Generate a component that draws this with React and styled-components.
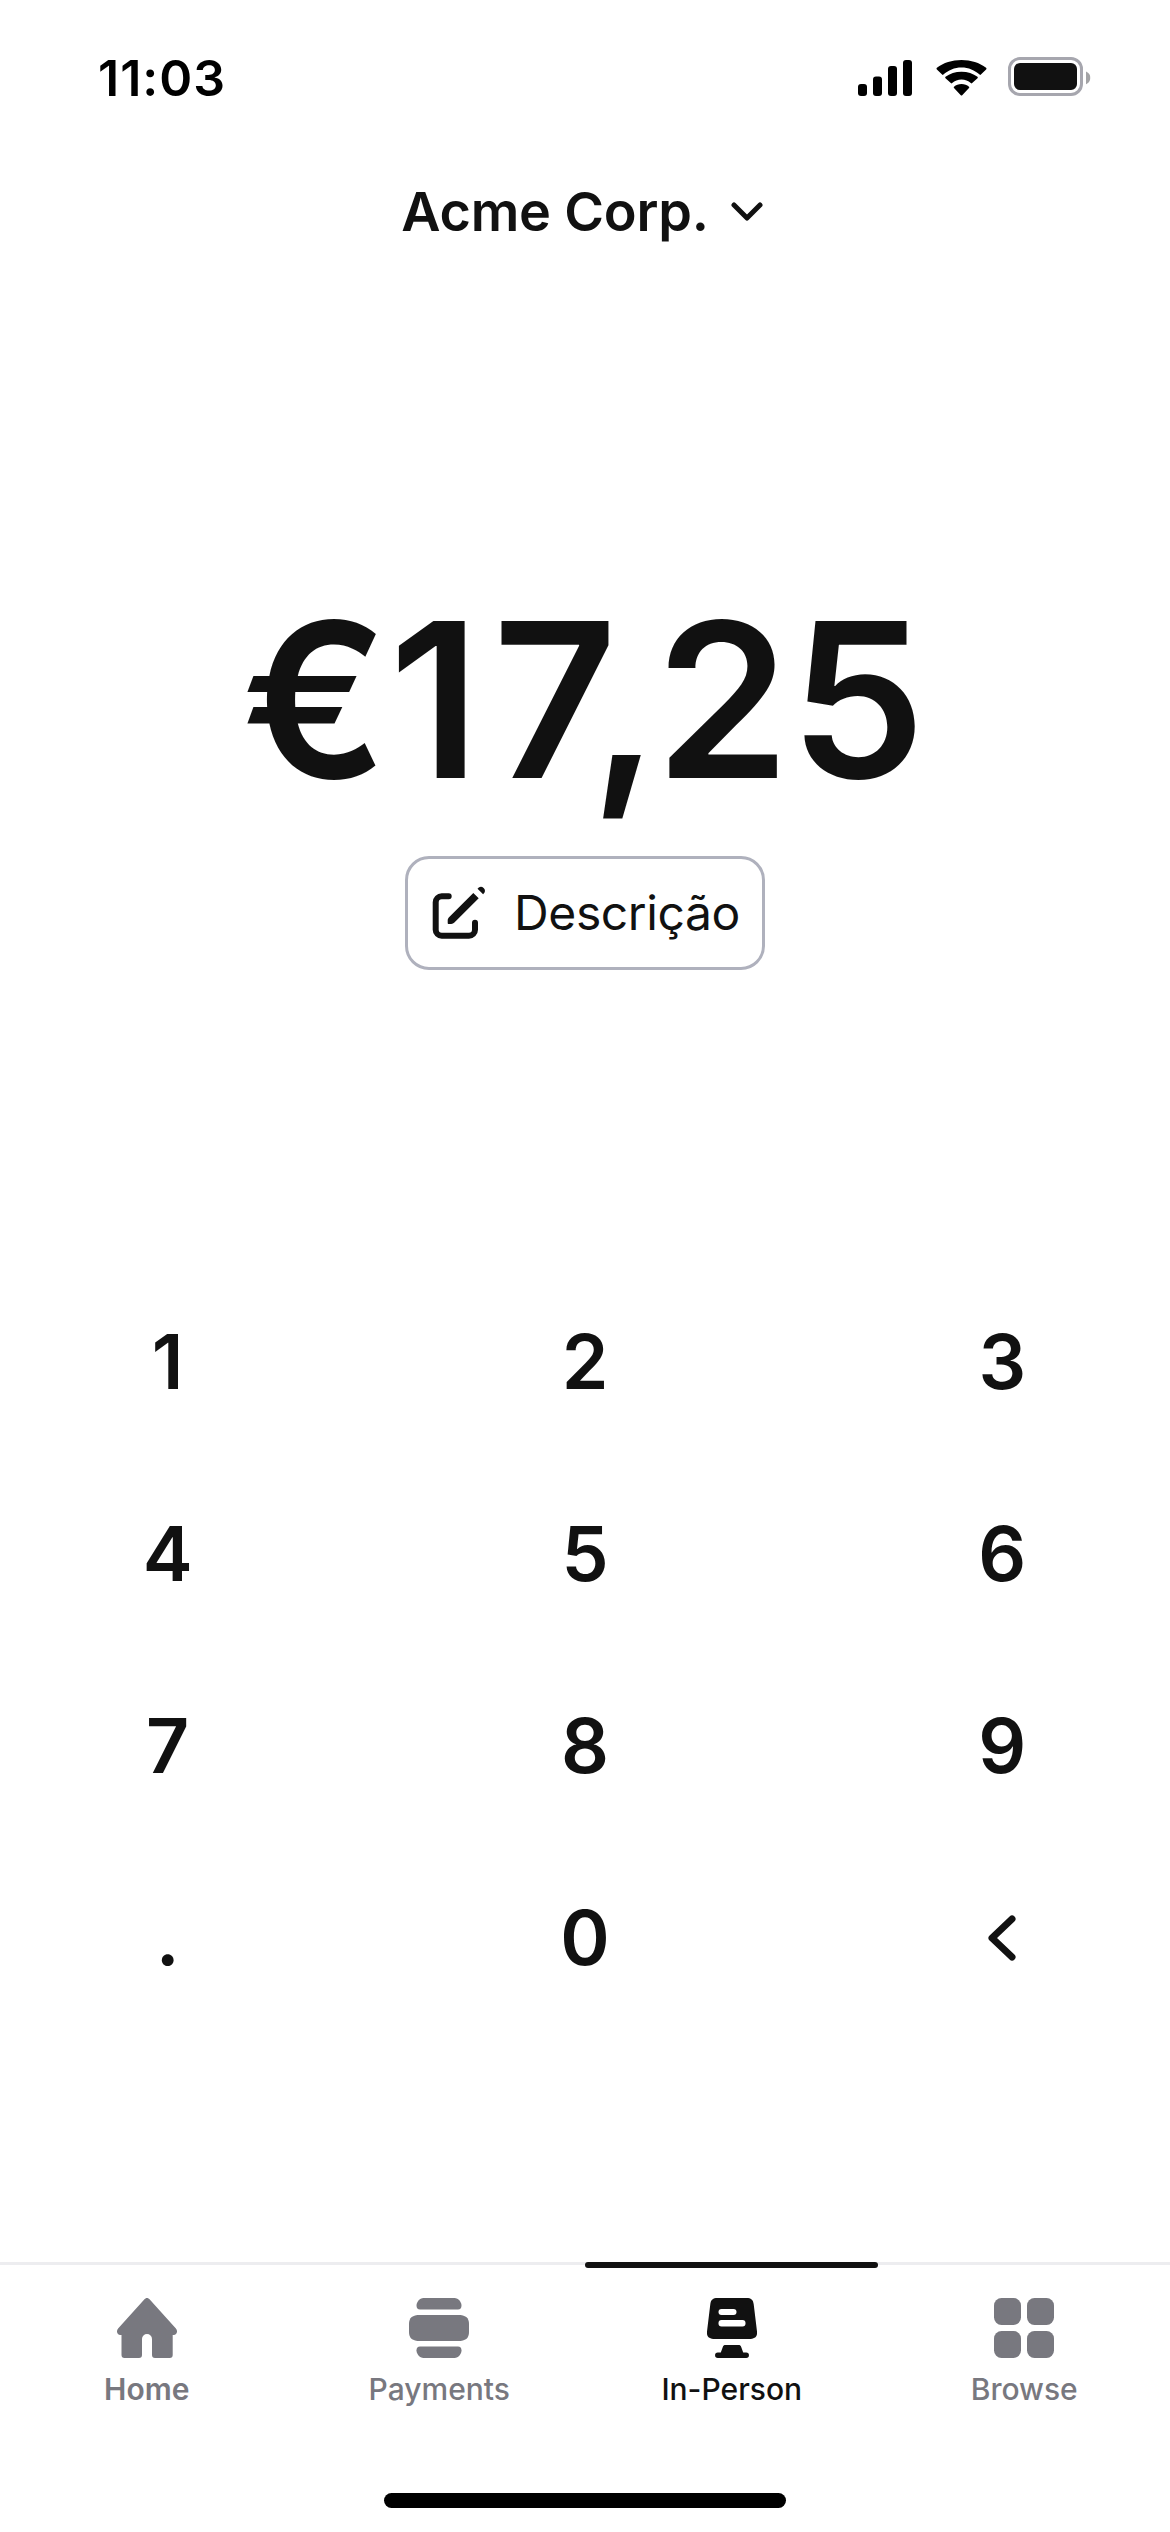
import React from 'react';
import styled, { createGlobalStyle } from 'styled-components'

const GlobalStyle = createGlobalStyle`
  * {
    box-sizing: border-box;
  }
  body {
    margin: 0;
    background-color: #fff;
    font-family: Inter, sans-serif;
    color: #111;
  }
`

const Screen = styled.div`
  display: flex;
  flex-direction: column;
  width: 1170px;
  height: 2532px;
  background-color: #fff;
  overflow: hidden;
`

const StatusBar = styled.div`
  display: flex;
  align-items: center;
  justify-content: space-between;
  height: 156px;
  padding: 0 79px 0 98px;
  color: #000;
`

const Time = styled.div`
  font-size: 50px;
  font-weight: 600;
  line-height: 60px;
  letter-spacing: 1px;
`

const StatusIcons = styled.div`
  display: flex;
  align-items: flex-end;
  margin-bottom: 3px;

  svg {
    display: block;
  }
  svg + svg {
    margin-left: 24px;
  }
  svg:last-child {
    margin-left: 21px;
  }
`

const Account = styled.button`
  display: flex;
  align-items: center;
  justify-content: center;
  height: 112px;
  padding: 0 6px 0 0;
  border: none;
  background: none;
  color: #111;
  font-family: inherit;
  font-size: 54px;
  font-weight: 600;
  line-height: 64px;
  letter-spacing: -0.2px;
  gap: 22px;
`

const AmountArea = styled.div`
  display: flex;
  flex-direction: column;
  align-items: center;
  height: 998px;
  padding-top: 301px;
`

const Amount = styled.div`
  padding-right: 3px;
  font-size: 216px;
  font-weight: 600;
  font-kerning: none;
  line-height: 262px;
  white-space: nowrap;
`

const Digit = styled.span`
  letter-spacing: ${({ $space }) => $space}px;
`

const DescriptionButton = styled.button`
  display: flex;
  align-items: center;
  justify-content: center;
  width: 360px;
  height: 114px;
  margin-top: 25px;
  padding: 0 0 0 2px;
  border: 3px solid #afb1bd;
  border-radius: 24px;
  background-color: #fff;
  color: #111;
  font-family: inherit;
  font-size: 48px;
  line-height: 58px;
  letter-spacing: -0.4px;
  gap: 28px;
`

const Keypad = styled.div`
  display: grid;
  grid-template-columns: repeat(3, 1fr);
  grid-auto-rows: 192px;
  width: 1252px;
  margin-left: -41px;
`

const Key = styled.button`
  display: flex;
  align-items: center;
  justify-content: center;
  padding: 0;
  border: none;
  background: none;
  color: #111;
  font-family: inherit;
  font-size: 75px;
  font-weight: 600;
  line-height: 90px;
`

const TabBar = styled.nav`
  display: grid;
  grid-template-columns: repeat(4, 1fr);
  height: 231px;
  margin-top: auto;
  border-top: 3px solid #ededf0;
`

const Tab = styled.a`
  position: relative;
  display: flex;
  flex-direction: column;
  align-items: center;
  padding: 33px 0 0 1px;
  gap: 13px;
  color: ${({ $active }) => ($active ? '#111' : '#78787f')};
  font-size: 30px;
  font-weight: ${({ $bold }) => ($bold ? 600 : 500)};
  line-height: 36px;

  svg {
    display: block;
  }
`

// sits over the top border of the bar
const ActiveLine = styled.div`
  position: absolute;
  top: -3px;
  left: 0;
  width: 100%;
  height: 6px;
  border-radius: 3px;
  background-color: #111;
`

const HomeIndicator = styled.div`
  align-self: center;
  width: 402px;
  height: 15px;
  margin-bottom: 24px;
  border-radius: 8px;
  background-color: #000;
`

const SignalIcon = () => (
  <svg width="54" height="36" viewBox="0 0 54 36">
    <rect x="0" y="24" width="9" height="12" rx="3" />
    <rect x="15" y="16.5" width="9" height="19.5" rx="3" />
    <rect x="30" y="6" width="9" height="30" rx="3" />
    <rect x="45" y="0" width="9" height="36" rx="3" />
  </svg>
)

const WifiIcon = () => (
  <svg width="51" height="36" viewBox="0 0 51 36">
    <path d="M25.5 7.4c7 0 13.300 2.700 18.100 7.200a.9.9 0 0 0 1.300 0l5.200-5.200c.6-.5.500-1.200 0-1.700C43.500 2.800 35 0 25.500 0S7.500 2.800.9 7.700C.4 8.200.3 8.900.9 9.400l5.200 5.200a.9.9 0 0 0 1.300 0C12.200 10.100 18.500 7.400 25.500 7.400z" />
    <path d="M25.500 19.400c3.600 0 6.800 1.400 9.300 3.600.5.500 1 .5 1.400 0l5.300-4.700c.5-.5.5-1.100 0-1.600C37.200 13.600 31.600 11.700 25.500 11.700S13.800 13.600 9.500 16.700c-.5.5-.5 1.100 0 1.600l5.300 4.700c.4.5.9.5 1.400 0 2.500-2.200 5.700-3.600 9.300-3.600z" />
    <path d="M33 26.700c.4.400.4.900 0 1.300l-6.800 7.200a1 1 0 0 1-1.400 0L18 28c-.4-.4-.4-.9 0-1.300 2-1.700 4.600-2.700 7.500-2.700s5.500 1 7.500 2.700z" />
  </svg>
)

const BatteryIcon = () => (
  <svg width="83" height="39" viewBox="0 0 83 39">
    <rect x="1.500" y="1.500" width="72" height="36" rx="10.500" fill="none" stroke="#a6a6ae" strokeWidth="3" />
    <rect x="6" y="6" width="63" height="27" rx="6" fill="#111" />
    <path d="M78 14.500c3.800 2 4.200 4 4.200 6.200s-.4 4.500-4.200 6.500z" fill="#a3a3a5" />
  </svg>
)

const EditIcon = () => (
  <svg width="54" height="54" viewBox="0 0 54 54" fill="none">
    <path d="M16.700 10.300H9.700a6 6 0 0 0-6 6v27.400a6 6 0 0 0 6 6h27.300a6 6 0 0 0 6-6V36.700" stroke="#111" strokeWidth="6" strokeLinecap="round" />
    <path d="M41.300 7l5.400 5.300-24.300 24.300a4.500 4.500 0 0 1-3.200 1.400h-2.400c-.7 0-1.100-.5-1.100-1.100v-2.500c0-1.200.5-2.300 1.300-3.100z" fill="#111" />
    <path d="M45.500 2.800l1.300-1.300a4 4 0 0 1 5.600 5.300l-1.300 1.400z" fill="#111" />
  </svg>
)

const HomeIcon = () => (
  <svg width="60" height="60" viewBox="0 0 60 60" fill="currentColor">
    <path d="M27.700 1.100a3.200 3.200 0 0 1 4.600 0l26.600 29.400c2.200 2.400 1 6.500-2.200 6.500h-1v20a3 3 0 0 1-3 3H38a3 3 0 0 1-3-3V41a5 5 0 0 0-10 0v16a3 3 0 0 1-3 3H7.500a3 3 0 0 1-3-3V37H3.300C.1 37-1.100 32.900 1.100 30.500z" />
  </svg>
)

const PaymentsIcon = () => (
  <svg width="60" height="60" viewBox="0 0 60 60" fill="currentColor">
    <path d="M14.500 0h31c4 0 7 4 7 7.700 0 2.200-1.200 3.800-3.500 3.800H11c-2.300 0-3.500-1.600-3.500-3.800C7.500 4 10.500 0 14.500 0z" />
    <path d="M11 17h38c7.500 0 11 2.600 11 9v8c0 6.400-3.500 9-11 9H11C3.500 43 0 40.400 0 34v-8c0-6.400 3.500-9 11-9z" />
    <path d="M11 48.500h38c2.300 0 3.500 1.600 3.500 3.800 0 3.700-3 7.700-7 7.700h-31c-4 0-7-4-7-7.700 0-2.200 1.200-3.800 3.500-3.800z" />
  </svg>
)

const TerminalIcon = () => (
  <svg width="50" height="60" viewBox="0 0 50 60">
    <path d="M10.500 0h29c4.500 0 6.700 1.700 7.200 6.200L50 33.500c.6 5.500-2.300 7.500-8 7.500H8c-5.700 0-8.600-2-8-7.500L3.300 6.200C3.800 1.700 6 0 10.500 0z" fill="#111" />
    <rect x="11.500" y="11" width="18" height="6" rx="3" fill="#fff" />
    <rect x="11.500" y="22" width="27" height="6.500" rx="3" fill="#fff" />
    <path d="M18.500 47h13c1.500 0 2.200.5 2.700 2l2 5.500h3a2.700 2.700 0 0 1 0 5.500H10.800a2.700 2.700 0 0 1 0-5.500h3l2-5.500c.5-1.500 1.200-2 2.700-2z" fill="#111" />
  </svg>
)

const BrowseIcon = () => (
  <svg width="60" height="60" viewBox="0 0 60 60" fill="currentColor">
    <rect x="0" y="0" width="27" height="27" rx="7.500" />
    <rect x="33" y="0" width="27" height="27" rx="7.500" />
    <rect x="0" y="33" width="27" height="27" rx="7.500" />
    <rect x="33" y="33" width="27" height="27" rx="7.500" />
  </svg>
)

const keys = ['1', '2', '3', '4', '5', '6', '7', '8', '9', '.', '0']

const App = () => {
  return (
    <Screen>
      <GlobalStyle />
      <StatusBar>
        <Time>11:03</Time>
        <StatusIcons>
          <SignalIcon />
          <WifiIcon />
          <BatteryIcon />
        </StatusIcons>
      </StatusBar>

      <Account>
        Acme Corp.
        <svg width="32" height="20" viewBox="0 0 32 20" fill="none" stroke="#111" strokeWidth="5" strokeLinecap="round" strokeLinejoin="round">
          <path d="M3 3l13 13L29 3" />
        </svg>
      </Account>

      <AmountArea>
        {/* pairs are spaced by hand, the font's own kerning is off */}
        <Amount>
          <Digit $space={1}>€</Digit>
          <Digit $space={12.5}>1</Digit>
          <Digit $space={-27}>7</Digit>
          <Digit $space={-4}>,</Digit>
          <Digit $space={0}>25</Digit>
        </Amount>
        <DescriptionButton>
          <EditIcon />
          Descrição
        </DescriptionButton>
      </AmountArea>

      <Keypad>
        {keys.map((key) => (
          <Key key={key}>{key}</Key>
        ))}
        <Key>
          <svg width="28" height="46" viewBox="0 0 28 46" fill="none" stroke="#111" strokeWidth="7" strokeLinecap="round" strokeLinejoin="round">
            <path d="M24 4L4 23l20 19" />
          </svg>
        </Key>
      </Keypad>

      <TabBar>
        <Tab $bold>
          <HomeIcon />
          Home
        </Tab>
        <Tab>
          <PaymentsIcon />
          Payments
        </Tab>
        <Tab $active>
          <ActiveLine />
          <TerminalIcon />
          In-Person
        </Tab>
        <Tab>
          <BrowseIcon />
          Browse
        </Tab>
      </TabBar>
      <HomeIndicator />
    </Screen>
  )
}

export default App
